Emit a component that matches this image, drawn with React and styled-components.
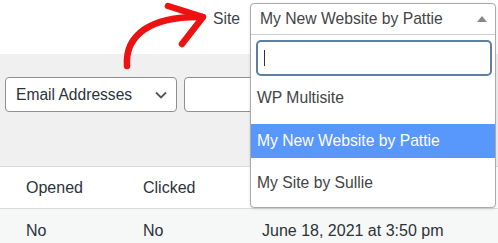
import React from "react";
import styled, { createGlobalStyle } from "styled-components";

const GlobalStyle = createGlobalStyle`
  html, body {
    margin: 0;
    padding: 0;
    background: #fff;
  }
  body {
    font-family: "Liberation Sans", Arial, sans-serif;
    color: #3c434a;
    width: 498px;
    height: 243px;
    overflow: hidden;
  }
`;

const Page = styled.div`
  position: relative;
  width: 498px;
  height: 243px;
  overflow: hidden;
`;

const TopBar = styled.div`
  height: 54px;
  box-sizing: border-box;
  display: flex;
  justify-content: flex-end;
  align-items: flex-start;
  padding: 3px 2px 0 0;
  gap: 10px;
`;

const Label = styled.span`
  font-size: 15.7px;
  line-height: 32px;
  color: #3c434a;
`;

const SelectWrap = styled.div`
  position: relative;
  width: 246px;
  height: 32px;
  z-index: 5;
`;

const Dropdown = styled.div`
  position: absolute;
  top: 0;
  left: 0;
  width: 246px;
  height: 205px;
  box-sizing: border-box;
  background: #fff;
  border: 1px solid #aaa;
  border-radius: 4px;
  box-shadow: 0 1px 3px rgba(0, 0, 0, 0.12);
  display: flex;
  flex-direction: column;
`;

const Current = styled.div`
  height: 31px;
  box-sizing: border-box;
  border-bottom: 1px solid #ccc;
  display: flex;
  align-items: center;
  justify-content: space-between;
  padding: 0 8px 0 9px;
  font-size: 15.7px;
  color: #444;
`;

const SearchBox = styled.div`
  padding: 5px 3px 0 5px;
`;

const SearchInput = styled.div`
  height: 36px;
  box-sizing: border-box;
  border: 2px solid #5d7fa3;
  border-radius: 5px;
  display: flex;
  align-items: center;
  padding-left: 6px;
`;

const Cursor = styled.span`
  width: 1px;
  height: 16px;
  background: #333;
`;

const Options = styled.ul`
  list-style: none;
  margin: 5px 0 0;
  padding: 0;
  display: flex;
  flex-direction: column;
  gap: 8.5px;
`;

const Option = styled.li`
  height: 34px;
  display: flex;
  align-items: center;
  padding-left: 6px;
  font-size: 15.7px;
  color: ${(p) => (p.$active ? "#fff" : "#444")};
  background: ${(p) => (p.$active ? "#5897fb" : "transparent")};
`;

const Toolbar = styled.div`
  height: 112px;
  box-sizing: border-box;
  background: #f0f0f1;
  display: flex;
  align-items: flex-start;
  gap: 7px;
  padding: 23px 0 0 5px;
`;

const Select = styled.div`
  width: 172px;
  height: 35px;
  box-sizing: border-box;
  background: #fff;
  border: 1px solid #8c8f94;
  border-radius: 4px;
  display: flex;
  align-items: center;
  justify-content: space-between;
  padding: 0 9px 0 10px;
  font-size: 15.6px;
  color: #2c3338;
`;

const TextField = styled.div`
  width: 220px;
  height: 35px;
  box-sizing: border-box;
  background: #fff;
  border: 1px solid #8c8f94;
  border-radius: 4px;
`;

const Row = styled.div`
  display: grid;
  grid-template-columns: 117px 119px 1fr;
  align-items: center;
  padding-left: 26px;
  height: ${(p) => (p.$head ? "43px" : "44px")};
  box-sizing: border-box;
  background: ${(p) => (p.$head ? "#fff" : "#f6f7f7")};
  border-top: ${(p) => (p.$head ? "1px solid #dcdcde" : "none")};
  border-bottom: ${(p) => (p.$head ? "1px solid #dcdcde" : "none")};
  font-size: 16px;
  color: #2c3338;
`;

const Cell = styled.span`
  white-space: nowrap;
`;

const Arrow = styled.svg`
  position: absolute;
  left: 0;
  top: 0;
  width: 498px;
  height: 243px;
  pointer-events: none;
  z-index: 4;
`;

const App = () => {
  return (
    <Page>
      <GlobalStyle />
      <TopBar>
        <Label>Site</Label>
        <SelectWrap>
          <Dropdown>
            <Current>
              <span>My New Website by Pattie</span>
              <svg width="10" height="6" viewBox="0 0 10 6">
                <path d="M0 6 L5 0 L10 6 Z" fill="#888" />
              </svg>
            </Current>
            <SearchBox>
              <SearchInput>
                <Cursor />
              </SearchInput>
            </SearchBox>
            <Options>
              <Option>WP Multisite</Option>
              <Option $active>My New Website by Pattie</Option>
              <Option>My Site by Sullie</Option>
            </Options>
          </Dropdown>
        </SelectWrap>
      </TopBar>
      <Toolbar>
        <Select>
          <span>Email Addresses</span>
          <svg width="12" height="8" viewBox="0 0 12 8">
            <path d="M1 1.5 L6 6.5 L11 1.5" fill="none" stroke="#50575e" strokeWidth="1.8" />
          </svg>
        </Select>
        <TextField />
      </Toolbar>
      <Row $head>
        <Cell>Opened</Cell>
        <Cell>Clicked</Cell>
        <Cell />
      </Row>
      <Row>
        <Cell>No</Cell>
        <Cell>No</Cell>
        <Cell>June 18, 2021 at 3:50 pm</Cell>
      </Row>
      <Arrow viewBox="0 0 498 243">
        <g fill="none" stroke="#ee1111" strokeWidth="6.5" strokeLinecap="round" strokeLinejoin="round">
          <path d="M127 66 C125 35 150 16 202 17" />
          <path d="M168 6 L203 17 L182 44" />
        </g>
      </Arrow>
    </Page>
  );
};

export default App;
